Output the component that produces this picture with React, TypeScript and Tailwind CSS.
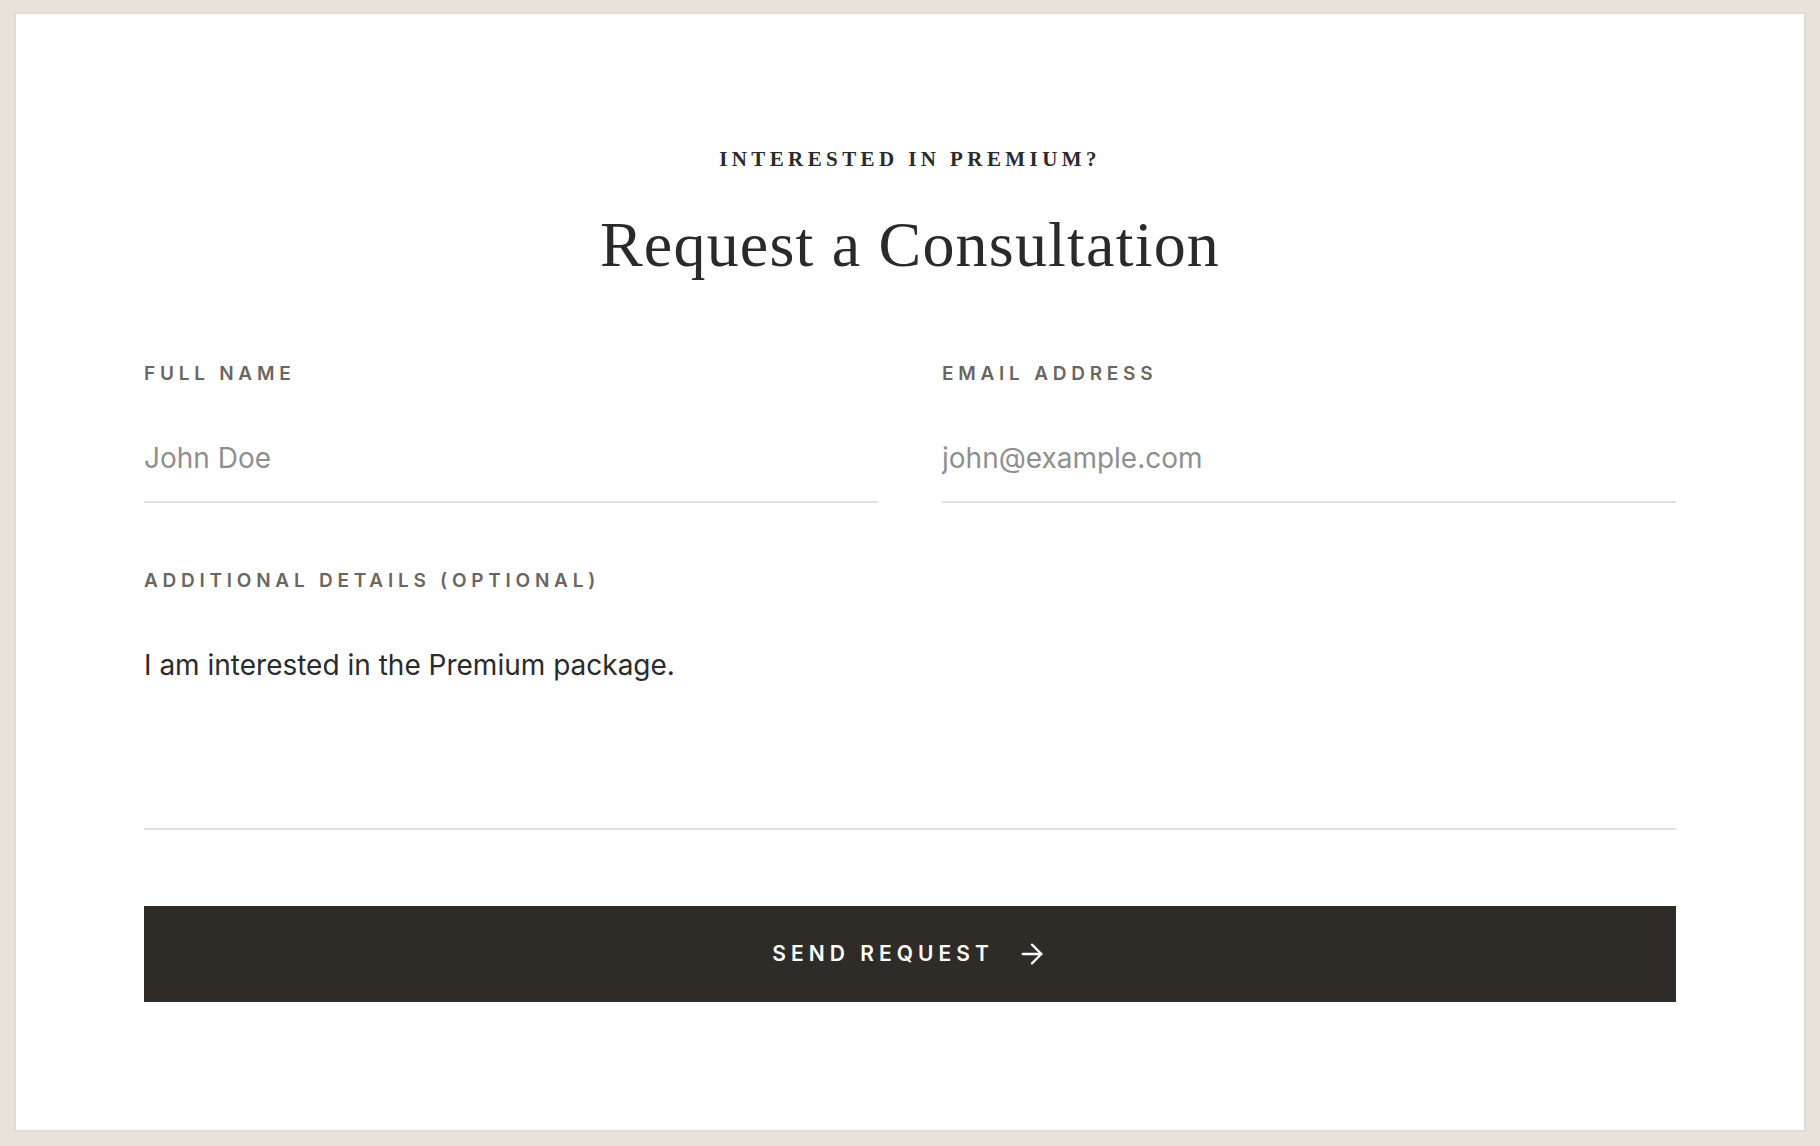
import { ArrowRight } from 'lucide-react';

const labelClass =
  "block font-['Inter',sans-serif] text-[19px] leading-[24px] font-semibold uppercase tracking-[0.25em] text-[#6b6660]";

const fieldClass =
  "mt-[28px] block w-full border-0 border-b-2 border-[#e2e0dd] bg-transparent pt-[24px] pb-[23px] font-['Inter',sans-serif] text-[28px] leading-[40px] text-[#2b2b2b] outline-none placeholder:text-[#8f8f8f]";

export default function App() {
  return (
    <div className="flex h-screen flex-col bg-[#e8e2da] px-[14px] pt-[12px] pb-[14px]">
      <div className="flex-1 border-2 border-[#dfdcd8] bg-white px-[128px] pt-[131px]">
        {/* Heading */}
        <div className="text-center">
          <p className="font-['Liberation_Serif',serif] text-[21px] leading-[28px] font-bold uppercase tracking-[0.21em] text-[#2b2b2b]">
            Interested in Premium?
          </p>
          <h1 className="mt-[34px] font-['Liberation_Serif',serif] text-[64px] leading-[76px] tracking-[1.2px] text-[#2a2a2a]">
            Request a Consultation
          </h1>
        </div>

        {/* Form */}
        <form className="mt-[79px]" onSubmit={(e) => e.preventDefault()}>
          <div className="grid grid-cols-2 gap-x-[64px]">
            <div>
              <label className={labelClass}>Full Name</label>
              <input type="text" placeholder="John Doe" className={fieldClass} />
            </div>
            <div>
              <label className={labelClass}>Email Address</label>
              <input type="email" placeholder="john@example.com" className={fieldClass} />
            </div>
          </div>

          <div className="mt-[66px]">
            <label className={labelClass}>Additional Details (Optional)</label>
            <textarea
              defaultValue="I am interested in the Premium package."
              className={`${fieldClass} h-[209px] resize-none`}
            />
          </div>

          <button
            type="submit"
            className="mt-[76px] flex h-[96px] w-full items-center justify-center gap-[22px] bg-[#2f2b27] font-['Inter',sans-serif] text-[21px] font-semibold uppercase tracking-[0.24em] text-white"
          >
            <span>Send Request</span>
            <ArrowRight size={32} strokeWidth={1.75} />
          </button>
        </form>
      </div>
    </div>
  );
}
